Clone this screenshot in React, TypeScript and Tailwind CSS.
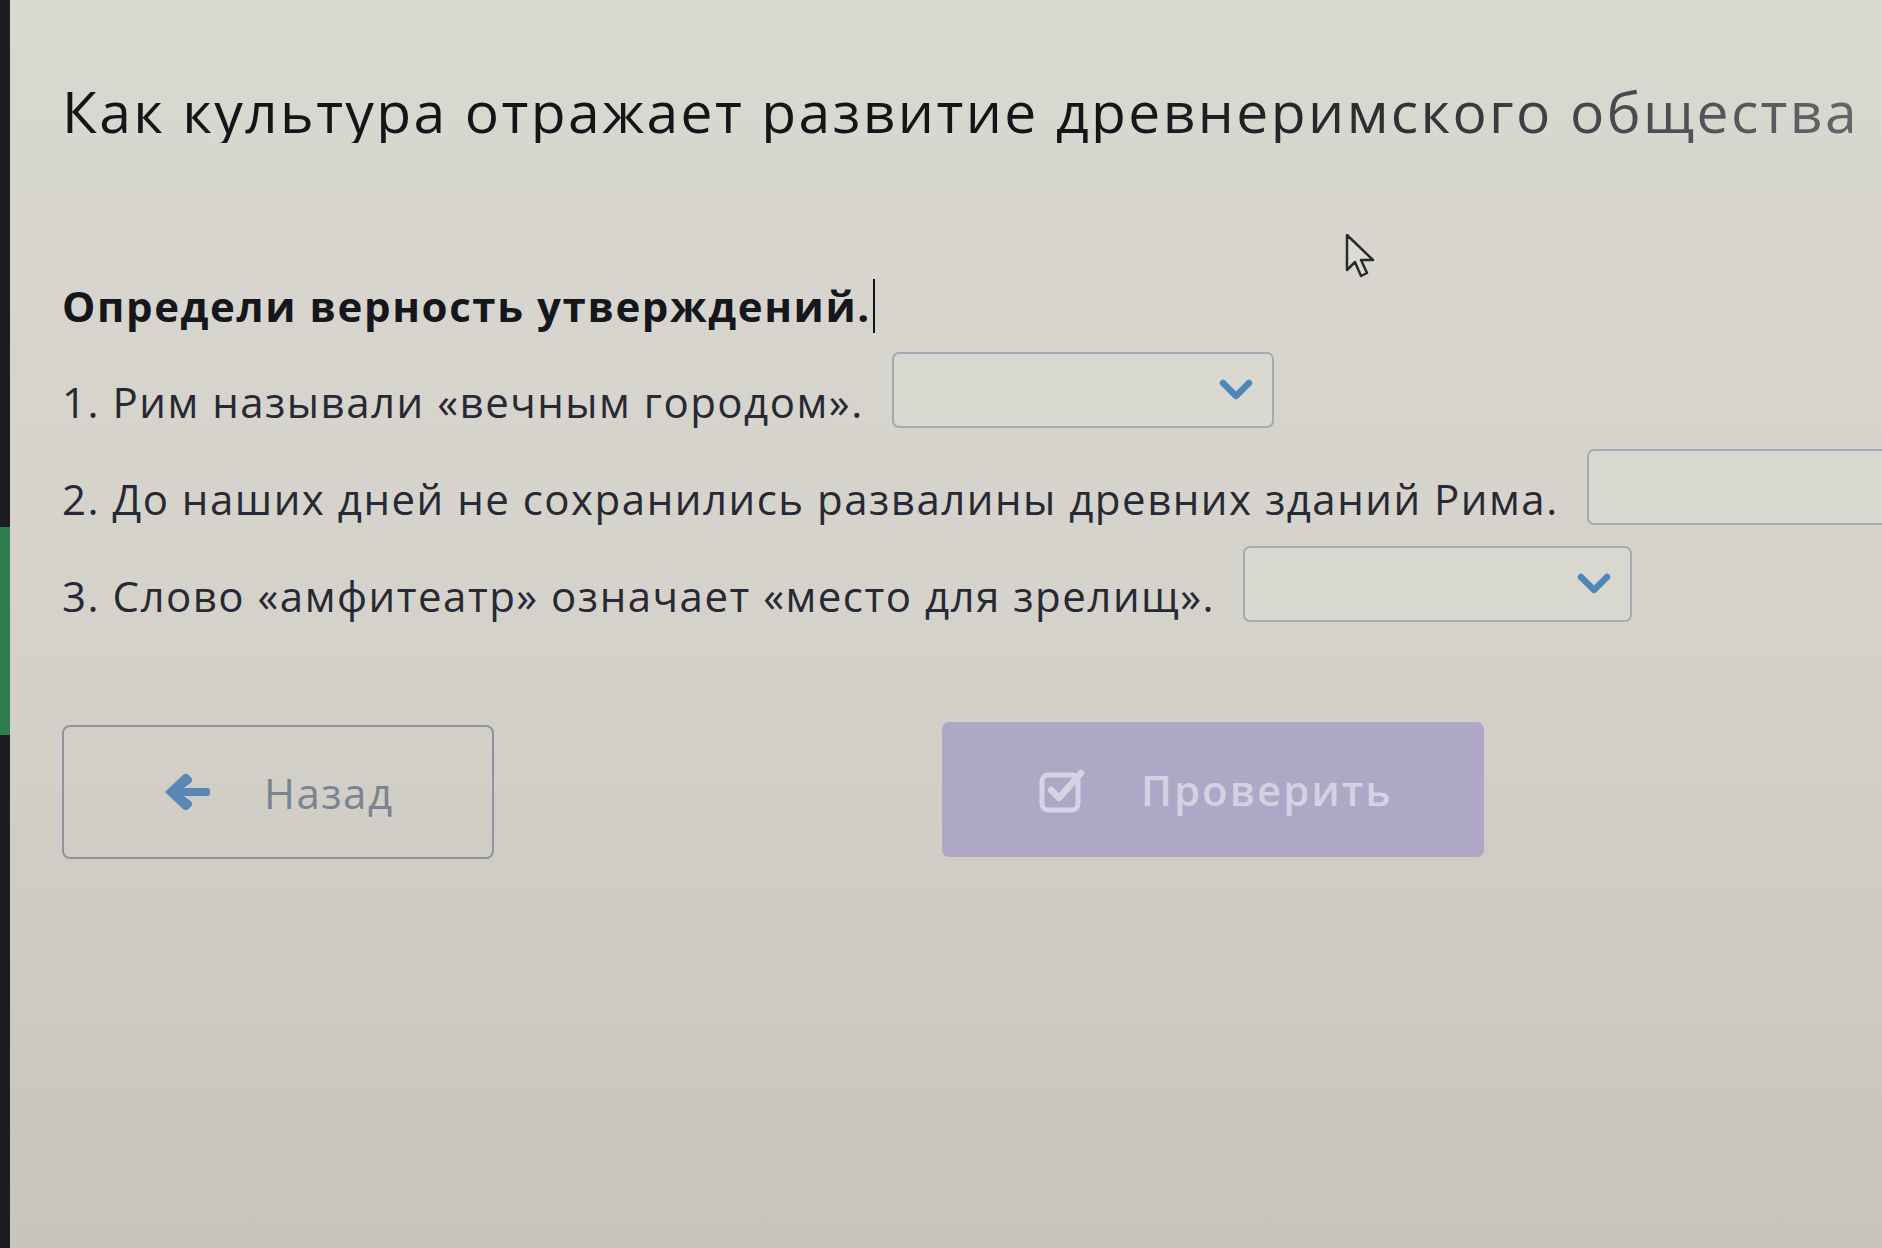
import React from 'react';

// Quiz screen: "Как культура отражает развитие древнеримского общества"

const font = { fontFamily: '"Open Sans", "Noto Sans", Arial, sans-serif' };

function Chevron() {
  return (
    <svg width="36" height="26" viewBox="0 0 36 26" className="shrink-0">
      <polyline points="5,6 18,19 31,6" fill="none" stroke="#4f86b8" strokeWidth="6.5" strokeLinecap="round" strokeLinejoin="round" />
    </svg>
  );
}

function Select({ width, chevron = true }: { width: string; chevron?: boolean }) {
  return (
    <div className={'shrink-0 h-[76px] rounded-[7px] border-2 border-[#a6aab2] bg-[#d8d7d0] flex items-center justify-end pr-[18px] -translate-y-[12px] ' + width}>
      {chevron && <Chevron />}
    </div>
  );
}

const items = [
  { text: '1. Рим называли «вечным городом».', w: 'w-[382px]' },
  { text: '2. До наших дней не сохранились развалины древних зданий Рима.', w: 'w-[389px]' },
  { text: '3. Слово «амфитеатр» означает «место для зрелищ».', w: 'w-[389px]' },
];

export default function App() {
  return (
    <div className="relative w-screen h-[1248px] overflow-hidden flex bg-linear-to-b from-[#d9d8d1] via-[#d4d2ca] to-[#c6c4bb]" style={font}>
      {/* left window edge */}
      <div className="w-[10px] shrink-0 flex flex-col bg-[#1d1c21]">
        <div className="h-[527px]" />
        <div className="h-[208px] bg-[#2e7d4c]" />
      </div>

      <div className="flex-1 pl-[52px] pt-[79px]">
        <h1 className="text-[57px] leading-[64px] tracking-[2.4px] whitespace-nowrap bg-linear-to-r from-[#141519] from-55% to-[#72747a] bg-clip-text text-transparent">
          Как культура отражает развитие древнеримского общества
        </h1>

        <div className="mt-[136px] flex items-center text-[42px] leading-[48px] tracking-[1.6px] font-bold text-[#16171c]">
          Определи верность утверждений.
          <span className="ml-[2px] w-[2px] h-[54px] bg-[#111]" />
        </div>

        <div className="mt-[31px] flex flex-col gap-[21px]">
          {items.map((it) => (
            <div key={it.text} className="flex items-center gap-[28px] h-[76px] whitespace-nowrap">
              <span className="text-[42px] leading-[46px] tracking-[1.5px] text-[#272934]">{it.text}</span>
              <Select width={it.w} />
            </div>
          ))}
        </div>

        <div className="mt-[91px] flex items-start">
          <button className="w-[432px] h-[134px] rounded-[8px] border-2 border-[#8d939f] flex items-center pl-[98px] gap-[52px] text-[42px] tracking-[1.5px] text-[#7b8391]">
            <svg width="50" height="42" viewBox="0 0 50 42">
              <path d="M3 21 L21 4 Q24 1.5 27 4.5 L29 6.5 Q31.5 9.5 28.5 12 L22 17 L45 17 Q48 17 48 20 L48 22 Q48 25 45 25 L22 25 L28.5 30 Q31.5 32.5 29 35.5 L27 37.5 Q24 40.5 21 38 Z" fill="#5a86b6" />
            </svg>
            <span>Назад</span>
          </button>

          <button className="ml-[448px] -mt-[3px] w-[542px] h-[135px] rounded-[7px] bg-[#aea8c6] flex items-center pl-[97px] gap-[52px] text-[42px] tracking-[2px] font-semibold text-[#d4d1e2]">
            <svg width="50" height="46" viewBox="0 0 50 46">
              <rect x="3" y="8" width="36" height="35" rx="6" fill="none" stroke="#d6d3e4" strokeWidth="5" />
              <polyline points="12,23 20,31 42,6" fill="none" stroke="#d6d3e4" strokeWidth="6.5" strokeLinecap="round" strokeLinejoin="round" />
            </svg>
            <span>Проверить</span>
          </button>
        </div>
      </div>

      {/* mouse pointer */}
      <svg className="absolute left-[1344px] top-[232px]" width="36" height="48" viewBox="0 0 36 48">
        <path d="M3 3 L3 38 L11 30 L17 44 L23 41 L17 28 L29 28 Z" fill="#dcdbd6" stroke="#2a2a2e" strokeWidth="2.5" strokeLinejoin="round" />
      </svg>
    </div>
  );
}
